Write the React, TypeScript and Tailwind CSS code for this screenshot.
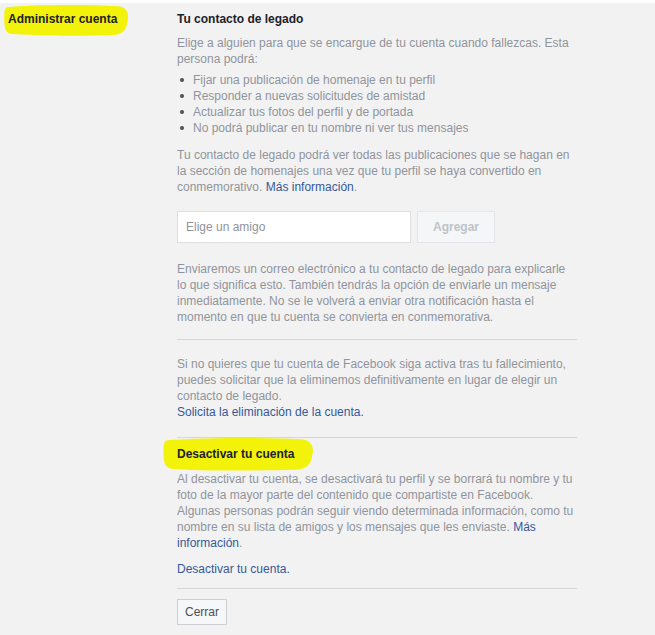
import React from "react";

const gray = "text-[#90949c]";
const link = "text-[#365899]";

function Highlight({ className }: { className: string }) {
  return (
    <svg
      className={"absolute -z-0 " + className}
      viewBox="0 0 100 30"
      preserveAspectRatio="none"
      aria-hidden
    >
      <path
        d="M3 3 C20 1 60 0 92 2 C98 3 100 8 99 15 C98 24 96 28 88 29 C60 30 25 30 6 28 C2 27 1 22 1 15 C1 8 1 4 3 3 Z"
        fill="#f2f20a"
      />
    </svg>
  );
}

const Divider = () => <div className="h-px bg-[#d6d6d6] w-full" />;

export default function App() {
  return (
    <div
      className="min-h-[635px] w-[655px] bg-[#f2f2f2] text-[12px] leading-[16px]"
      style={{ fontFamily: '"Liberation Sans", Arial, Helvetica, sans-serif' }}
    >
      <div className="h-[3px] bg-white" />
      <div className="flex">
        <div className="w-[177px] shrink-0 pl-[8px] pt-[8px]">
          <div className="relative inline-block">
            <Highlight className="left-[-5px] top-[-7px] w-[126px] h-[32px]" />
            <span className="relative font-bold text-[#1d2129]">Administrar cuenta</span>
          </div>
        </div>
        <div className="w-[400px] pt-[8px] pb-[10px]">
          <div className="font-bold text-[#1d2129]">Tu contacto de legado</div>
          <p className={gray + " mt-[8px]"}>
            Elige a alguien para que se encargue de tu cuenta cuando fallezcas. Esta persona podrá:
          </p>
          <ul className={gray + " mt-[5px]"}>
            {[
              "Fijar una publicación de homenaje en tu perfil",
              "Responder a nuevas solicitudes de amistad",
              "Actualizar tus fotos del perfil y de portada",
              "No podrá publicar en tu nombre ni ver tus mensajes",
            ].map((t) => (
              <li key={t} className="flex items-center">
                <span className="ml-[3px] mr-[9px] w-[4px] h-[4px] rounded-full bg-[#4b4f56]" />
                {t}
              </li>
            ))}
          </ul>
          <p className={gray + " mt-[11px]"}>
            Tu contacto de legado podrá ver todas las publicaciones que se hagan en la sección de
            homenajes una vez que tu perfil se haya convertido en conmemorativo.{" "}
            <a className={link}>Más información</a>.
          </p>
          <div className="flex gap-[6px] mt-[16px]">
            <input
              className="w-[234px] h-[32px] bg-white border border-[#dddfe2] px-[8px] text-[12px] placeholder:text-[#90949c] outline-none"
              placeholder="Elige un amigo"
            />
            <button className="w-[78px] h-[32px] border border-[#e5e6e9] bg-[#f5f6f7] font-bold text-[#bec3c9]">
              Agregar
            </button>
          </div>
          <p className={gray + " mt-[18px] pr-[8px]"}>
            Enviaremos un correo electrónico a tu contacto de legado para explicarle lo que
            significa esto. También tendrás la opción de enviarle un mensaje inmediatamente. No se
            le volverá a enviar otra notificación hasta el momento en que tu cuenta se convierta en
            conmemorativa.
          </p>
          <div className="mt-[14px]">
            <Divider />
          </div>
          <p className={gray + " mt-[16px] pr-[8px]"}>
            Si no quieres que tu cuenta de Facebook siga activa tras tu fallecimiento, puedes
            solicitar que la eliminemos definitivamente en lugar de elegir un contacto de legado.
          </p>
          <a className={link + " block"}>Solicita la eliminación de la cuenta.</a>
          <div className="mt-[17px]">
            <Divider />
          </div>
          <div className="relative mt-[8px] inline-block">
            <Highlight className="left-[-15px] top-[-9px] w-[152px] h-[34px]" />
            <span className="relative font-bold text-[#1d2129]">Desactivar tu cuenta</span>
          </div>
          <p className={gray + " mt-[9px]"}>
            Al desactivar tu cuenta, se desactivará tu perfil y se borrará tu nombre y tu foto de
            la mayor parte del contenido que compartiste en Facebook. Algunas personas podrán seguir
            viendo determinada información, como tu nombre en su lista de amigos y los mensajes que
            les enviaste. <a className={link}>Más información</a>.
          </p>
          <a className={link + " block mt-[10px]"}>Desactivar tu cuenta.</a>
          <div className="mt-[11px]">
            <Divider />
          </div>
          <button className="mt-[10px] h-[26px] px-[7px] border border-[#ccd0d5] bg-[#f6f7f9] text-[#4b4f56]">
            Cerrar
          </button>
        </div>
      </div>
    </div>
  );
}
